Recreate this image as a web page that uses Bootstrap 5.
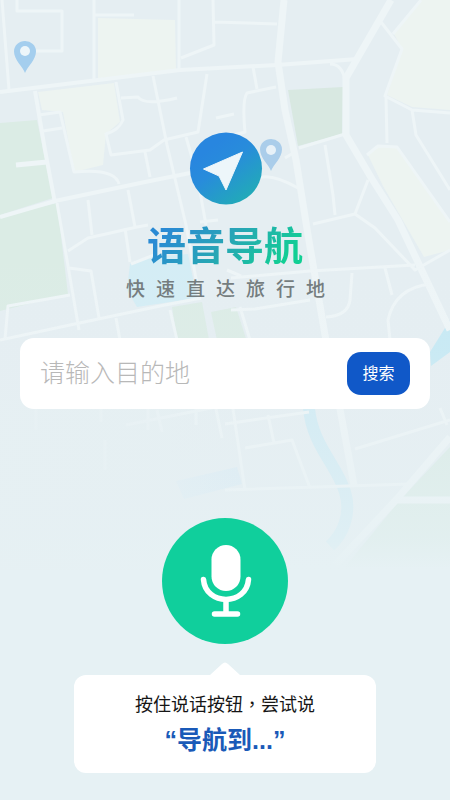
<!DOCTYPE html>
<html lang="zh-CN">
<head>
<meta charset="utf-8">
<meta name="viewport" content="width=device-width, initial-scale=1">
<title>语音导航</title>
<link href="https://cdn.jsdelivr.net/npm/bootstrap@5.3.0/dist/css/bootstrap.min.css" rel="stylesheet">
<style>
body { background: #e6f1f4; font-family: "Liberation Sans", "Noto Sans CJK SC", sans-serif; }
.map-layer { z-index: -1; height: 800px; }
.hero { padding-top: 132px; }
.hero-logo { width: 73px; height: 73px; }
.hero-title { margin-top: 14px; font-size: 39px; line-height: 48px; font-family: "Noto Sans CJK SC", sans-serif;
  background: linear-gradient(135deg, #2a8ad4 15%, #28a5b6 50%, #12cf94 88%); -webkit-background-clip: text; background-clip: text; color: transparent; }
.hero-sub { margin-top: 7px; font-size: 19px; line-height: 28px; letter-spacing: 11px; padding-left: 12px; color: #757d7f;
  font-family: "Noto Sans CJK SC", sans-serif; }
.search-box { margin: 36px 20px 0; padding: 14px 20px; border-radius: 14px; }
.search-box .form-control { font-size: 25px; line-height: 38px; font-weight: 300; color: #333; margin-bottom: 2px; }
.search-box .form-control::placeholder { color: #b8b8b8; opacity: 1; }
.search-btn { width: 63px; height: 43px; border-radius: 14px; background: #1058c8; font-size: 16px; color: #fff; }
.search-btn:hover { background: #0d4bab; color: #fff; }
.mic-btn { margin-top: 109px; width: 126px; height: 126px; background: #10cf9c; }
.mic-btn:hover, .mic-btn:active { background: #0dbd8e; }
.tip-arrow { margin-top: 18px; }
.tip { width: 67%; padding: 14px 12px 16px; border-radius: 12px; }
.tip-text { font-size: 18px; line-height: 28px; color: #161616; }
.tip-text span { font-family: "Noto Sans CJK TC", sans-serif; }
.tip-phrase { margin-top: 4px; font-size: 25px; line-height: 34px; color: #1a5ab8; }
</style>
</head>
<body class="position-relative min-vh-100 overflow-x-hidden">
<svg class="map-layer position-absolute top-0 start-0 w-100" viewBox="0 0 450 800" preserveAspectRatio="xMidYMin slice" aria-hidden="true">
  <defs>
    <linearGradient id="fade" x1="0" y1="0" x2="0" y2="1">
      <stop offset="0" stop-color="#e6f0f3" stop-opacity="0"/>
      <stop offset=".3" stop-color="#e6f0f3" stop-opacity=".1"/>
      <stop offset=".6" stop-color="#e6f0f3" stop-opacity=".4"/>
      <stop offset=".9" stop-color="#e6f1f4" stop-opacity=".7"/>
      <stop offset="1" stop-color="#e6f1f4"/>
    </linearGradient>
    <linearGradient id="fadeLeft" x1="0" y1="0" x2="1" y2="0">
      <stop offset="0" stop-color="#e6f0f3" stop-opacity=".8"/>
      <stop offset=".7" stop-color="#e6f0f3" stop-opacity=".5"/>
      <stop offset="1" stop-color="#e6f0f3" stop-opacity="0"/>
    </linearGradient>
    <path id="pin" d="M0 32C-2 26-11 19-11 10.500A11 10.500 0 0 1 11 10.500C11 19 2 26 0 32Z"/>
  </defs>
  <rect width="450" height="570" fill="#e5eef2"/>
  <g fill="#edf4f1">
    <path d="M98 18L175 20 176 70 98 79Z"/>
    <path d="M38 92L114 83 120 122 106 134 103 165 74 172 63 112 42 110Z"/>
    <path d="M420 0H450V110L412 107 387 95 402 49 394 34Z"/>
    <path d="M368 155L378 147 396 147 450 222V250L424 257 383 186Z"/>
  </g>
  <g fill="#dbece5">
    <path d="M0 123L37 120 53 198 0 215Z"/>
    <path d="M288 90L343 87 342 134 298 146Z" fill="#d8e8e1"/>
    <path d="M0 217L57 203 68 294 0 311Z"/>
    <path d="M172 307L202 302 210 345H178ZM211 312L236 307 248 345H218Z" fill="#dcece6"/>
    <path d="M450 447L400 500 345 567H450Z" fill="#d8ebe4"/>
  </g>
  <g fill="#d4edf5">
    <path d="M130 264Q136 258 154 257L188 254 197 298 137 307 127 290Z"/>
    <path d="M450 320L430 352 431 366 450 352Z" fill="#c6e9f4"/>
    <path d="M176 481L237 467 242 484 184 499Z" fill="#d8eaf4"/>
  </g>
  <path d="M309 408C312 445 337 465 345 492C352 515 342 535 330 546" fill="none" stroke="#cdeaf4" stroke-width="12"/>
  <g fill="none" stroke="#eef5f7" stroke-width="3" stroke-linejoin="round">
    <path d="M2 0L9 90M17 0V11H62V51H36M94 0V79M95 15H134M179 0V70M213 0L214 45 181 58M214 22L277 24"/>
    <path d="M0 92L180 70 277 65 358 59" stroke-width="4"/>
    <path d="M35 91L45 150 55 203" stroke-width="4"/>
    <path d="M39 115L60 112 74 172Q115 168 119 184M43 131L62 128"/>
    <path d="M116 82L123 120Q119 130 106 134L111 155 150 150 164 140 198 132 207 74M121 98L138 97Q144 106 177 98M153 76L167 145 186 225 200 300M145 152L150 177M186 137L197 175 206 225M216 118L234 114"/>
    <path d="M16 165L47 162" stroke-width="5"/>
    <path d="M0 217L55 201 145 182 190 173" stroke-width="4"/>
    <path d="M57 203L67 260 79 330M68 251L88 238 137 227 148 225M88 200L92 235M128 190L135 227M69 268L91 271 99 318M125 228L130 262M131 264L154 255"/>
    <path d="M0 340L70 325 160 306 201 298" stroke-width="3"/>
    <path d="M5 339L8 306 70 295M116 318L120 340M170 310L177 340"/>
    <path d="M284 0L278 62 285 110 296 160 308 235 325 335 340 409 354 485" stroke-width="7"/>
    <path d="M391 0L346 78V135L372 179 398 220 450 330" stroke-width="7"/>
    <path d="M330 64Q343 64 345 82M253 67L257 89M276 87L247 93Q242 100 245 132L216 140M299 148L345 134"/>
    <path d="M381 22L402 49 385 96 412 110 450 113M421 0L393 34M386 97L387 143M367 155L378 146 397 147 450 222M412 110L416 135 450 190"/>
    <path d="M325 145L333 195 335 215M313 224L355 214 368 180M355 214L375 228 415 270 450 250"/>
    <path d="M231 278L310 271 415 265M250 180L262 177Q275 175 298 188M231 310L255 309 310 300M227 270L241 276M352 273L350 300Q348 316 326 317M385 268L392 295M430 284Q395 288 388 320L390 340M240 307L250 340M285 158L295 152M200 222L218 220"/>
    <path d="M157 410L162 432M216 409L222 438M233 409L245 490M268 415L274 443M225 424L309 412M245 448L292 440 310 488M355 449L450 420M225 490L410 484M440 408L447 425"/>
    <path d="M450 437L396 500 335 565" stroke-width="7"/>
    <path d="M398 500H450" stroke-width="7"/>
    <path d="M36 409V430M101 409V422M148 409V430M196 408V425M105 440V470M126 425L226 405"/>
  </g>
  <rect y="250" width="450" height="320" fill="url(#fade)"/>
  <rect y="400" width="240" height="170" fill="url(#fadeLeft)"/>
  <g fill="#a4ceee">
    <use href="#pin" x="25" y="41"/>
    <use href="#pin" x="271" y="139" fill="#aacdea"/>
  </g>
  <circle cx="25" cy="51" r="5" fill="#edf6fa"/>
  <circle cx="271" cy="150" r="5" fill="#e7f1f8"/>
</svg>

<main class="d-flex flex-column align-items-center pb-4">
  <header class="hero d-flex flex-column align-items-center text-center">
    <svg class="hero-logo" viewBox="0 0 73 73" overflow="visible" aria-hidden="true">
      <defs><linearGradient id="logoFill" x1=".3" y1=".2" x2=".9" y2="1"><stop stop-color="#2886df"/><stop offset=".3" stop-color="#288cdb"/><stop offset="1" stop-color="#20b1b0"/></linearGradient></defs>
      <circle cx="38" cy="36.500" r="36" fill="url(#logoFill)"/>
      <path d="M54.500 20L38 58 31 44 15.500 37Z" fill="#edf6fa" stroke="#edf6fa" stroke-linejoin="round"/>
    </svg>
    <h1 class="hero-title fw-bold mb-0">语音导航</h1>
    <p class="hero-sub fw-medium mb-0">快速直达旅行地</p>
  </header>

  <form class="search-box align-self-stretch bg-white d-flex align-items-center" onsubmit="return false">
    <input type="text" class="form-control border-0 bg-transparent shadow-none p-0" placeholder="请输入目的地" aria-label="目的地">
    <button type="submit" class="search-btn btn border-0 p-0 flex-shrink-0">搜索</button>
  </form>

  <button type="button" class="mic-btn btn border-0 rounded-circle p-0 d-flex" aria-label="按住说话">
    <svg class="w-100 h-100" viewBox="0 0 126 126" fill="none" stroke="#fff" stroke-linecap="round" aria-hidden="true">
      <rect x="49.500" y="27" width="29" height="46" rx="14.500" fill="#fff" stroke="none"/>
      <path d="M41.500 61.500C43.500 88 84.500 88 86.500 61.500" stroke-width="5.500"/>
      <path d="M64 82V95M52.500 96H75.500" stroke-width="5.500"/>
    </svg>
  </button>

  <svg class="tip-arrow" width="30" height="13" viewBox="0 0 30 13" aria-hidden="true"><path d="M0 13L12 2Q15-1 18 2L30 13Z" fill="#fff"/></svg>
  <section class="tip bg-white text-center">
    <p class="tip-text mb-0">按住说话按钮<span lang="zh-TW">，</span>尝试说</p>
    <p class="tip-phrase fw-bold mb-0">“导航到...”</p>
  </section>
</main>
<script src="https://cdn.jsdelivr.net/npm/bootstrap@5.3.0/dist/js/bootstrap.bundle.min.js"></script>
</body>
</html>
